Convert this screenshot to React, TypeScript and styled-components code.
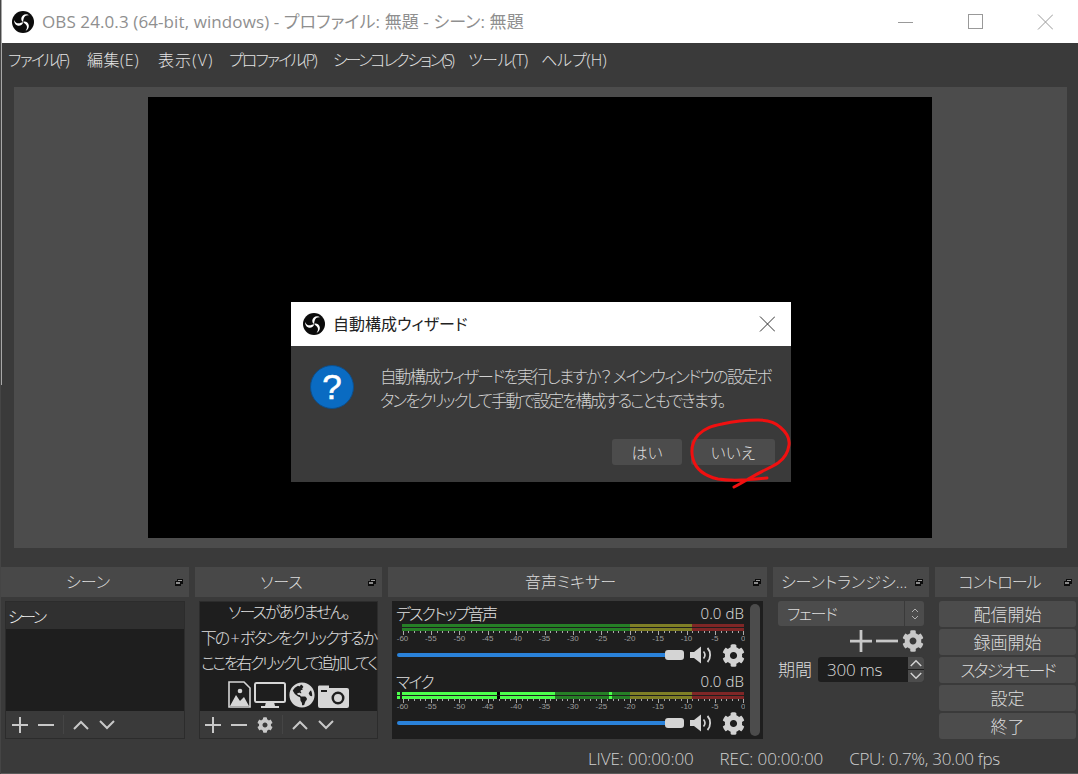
import * as React from 'react'
import styled, { createGlobalStyle } from 'styled-components'
import { FaCog, FaGlobeAmericas } from 'react-icons/fa'

const GlobalStyle = createGlobalStyle`
  html, body {
    margin: 0;
    padding: 0;
    background: #3a3a3a;
  }
  * {
    box-sizing: border-box;
  }
  body {
    font-family: "Open Sans", "Noto Sans CJK JP", sans-serif;
    font-feature-settings: "palt";
    font-weight: 300;
  }
`

const AppWindow = styled.div`
  position: relative;
  width: 1078px;
  height: 774px;
  display: flex;
  flex-direction: column;
  overflow: hidden;
  background: #3a3a3a;
  color: #dcdcdc;
  border-left: 1px solid #454545;
`
const EdgeLight = styled.div`
  position: absolute;
  left: 0;
  top: 0;
  width: 1px;
  height: 385px;
  background: #a8a8a8;
`
const TitleBar = styled.div`
  height: 43px;
  flex-shrink: 0;
  display: flex;
  align-items: center;
  padding: 0 25px 0 11px;
  background: #fff;
`
const TitleText = styled.div`
  margin-left: 8px;
  padding-bottom: 2px;
  font-size: 17px;
  font-weight: 400;
  letter-spacing: 0.1px;
  color: #8f8f8f;
  white-space: nowrap;
`
const WindowButtons = styled.div`
  margin-left: auto;
  display: flex;
  gap: 54px;
`
const MenuBar = styled.div`
  height: 44px;
  flex-shrink: 0;
  display: flex;
  padding: 4px 0 0 7px;
  font-size: 16px;
  color: #e4e4e4;
`
const MenuItem = styled.div<{ $w: number; $ls: number }>`
  width: ${p => p.$w}px;
  letter-spacing: ${p => p.$ls}px;
  white-space: nowrap;
`
const PreviewArea = styled.div`
  height: 461px;
  flex-shrink: 0;
  margin: 0 11px 0 13px;
  padding: 10px 0 0 134px;
  background: #4c4c4c;
`
const PreviewScreen = styled.div`
  width: 784px;
  height: 441px;
  background: #000;
`
const Docks = styled.div`
  height: 173px;
  flex-shrink: 0;
  margin-top: 19px;
  display: grid;
  grid-template-columns: 188px 187px 379px 156px 143px;
  gap: 6px;
`
const Dock = styled.div`
  min-width: 0;
  display: flex;
  flex-direction: column;
`
const DockHeader = styled.div`
  height: 30px;
  flex-shrink: 0;
  display: flex;
  align-items: center;
  padding-right: 6px;
  background: #484848;
  font-size: 16px;
  color: #dcdcdc;
`
const DockTitle = styled.div<{ $ls: number }>`
  flex: 1;
  min-width: 0;
  padding-bottom: 2px;
  letter-spacing: ${p => p.$ls}px;
  text-align: center;
  white-space: nowrap;
`
const FloatSvg = styled.svg`
  flex-shrink: 0;
`
const DockBody = styled.div<{ $pad: string }>`
  height: 138px;
  margin-top: 4px;
  padding: ${p => p.$pad};
  display: flex;
  flex-direction: column;
`
const ListBox = styled.div`
  flex: 1;
  display: flex;
  flex-direction: column;
  min-height: 0;
  border: 1px solid #2c2c2c;
  background: #1e1e1e;
`
const ListArea = styled.div`
  flex: 1;
  min-height: 0;
  display: flex;
  flex-direction: column;
`
const SceneRow = styled.div`
  height: 27px;
  display: flex;
  align-items: center;
  padding-left: 2px;
  background: #303030;
  font-size: 16px;
  letter-spacing: -2.4px;
  color: #f0f0f0;
`
const EmptyLine = styled.div<{ $ls: number }>`
  height: 25.5px;
  line-height: 20px;
  font-size: 16px;
  letter-spacing: ${p => p.$ls}px;
  text-align: center;
  white-space: nowrap;
  color: #e0e0e0;
`
const EmptyIcons = styled.div`
  margin-top: 2px;
  display: flex;
  justify-content: center;
  align-items: flex-end;
  gap: 3px;
  color: #d6d6d6;
`
const Toolbar = styled.div<{ $pad: number }>`
  height: 27px;
  flex-shrink: 0;
  display: flex;
  align-items: center;
  padding-left: ${p => p.$pad}px;
  background: #3a3a3a;
`
const ToolButton = styled.div`
  width: 26px;
  height: 27px;
  display: flex;
  align-items: center;
  justify-content: center;
  color: #c8c8c8;
`
const ToolSeparator = styled.div`
  width: 1px;
  height: 19px;
  margin: 0 4px;
  background: #454545;
`
const Mixer = styled.div`
  flex: 1;
  display: flex;
  padding: 3px 3px 3px 4px;
  background: #1e1e1e;
`
const MixerStrips = styled.div`
  width: 349px;
  display: flex;
  flex-direction: column;
  gap: 6px;
`
const Scrollbar = styled.div`
  width: 10px;
  margin-left: 5px;
  border-radius: 5px;
  background: #4c4c4c;
`
const Strip = styled.div`
  height: 62px;
  display: flex;
  flex-direction: column;
`
const StripTop = styled.div`
  height: 20px;
  flex-shrink: 0;
  display: flex;
  justify-content: space-between;
  align-items: center;
  padding: 0 1px 2px 0;
  font-size: 16px;
  color: #e0e0e0;
`
const StripName = styled.div`
  letter-spacing: -1.9px;
`
const StripLevel = styled.div`
  font-size: 15px;
  letter-spacing: 0.1px;
`
const Meter = styled.div`
  height: 7px;
  flex-shrink: 0;
  display: flex;
  flex-direction: column;
  gap: 1px;
`
const MeterChannel = styled.div`
  height: 3px;
  display: flex;
`
const MeterSegment = styled.div<{ $w: number; $c: string }>`
  width: ${p => p.$w}px;
  flex-shrink: 0;
  background: ${p => p.$c};
`
const Scale = styled.svg`
  display: block;
  flex-shrink: 0;
`
const SliderRow = styled.div`
  height: 22px;
  flex-shrink: 0;
  display: flex;
  align-items: center;
  padding-left: 1px;
  color: #d2d2d2;
`
const SliderTrack = styled.div`
  width: 268px;
  height: 4px;
  border-radius: 2px 0 0 2px;
  background: #2a82da;
`
const SliderHandle = styled.div`
  width: 19px;
  height: 10px;
  border-radius: 3px;
  background: #d4d4d4;
`
const SpeakerSlot = styled.div`
  margin-left: 6px;
  display: flex;
`
const GearSlot = styled.div`
  margin-left: 9px;
  display: flex;
`
const Combo = styled.div`
  height: 25px;
  flex-shrink: 0;
  display: flex;
  align-items: center;
  border-radius: 3px;
  background: #4c4c4c;
  font-size: 16px;
  letter-spacing: -1.4px;
`
const ComboText = styled.div`
  flex: 1;
  padding: 0 0 2px 9px;
`
const ComboArrows = styled.div`
  width: 20px;
  height: 25px;
  display: flex;
  align-items: center;
  justify-content: center;
  border-left: 1px solid #3a3a3a;
  color: #b0b0b0;
`
const TransitionTools = styled.div`
  height: 22px;
  flex-shrink: 0;
  margin: 4px 0;
  display: flex;
  justify-content: flex-end;
  align-items: center;
  gap: 4px;
  color: #c8c8c8;
`
const DurationRow = styled.div`
  display: flex;
  align-items: center;
  font-size: 17px;
`
const DurationLabel = styled.div`
  width: 40px;
  padding-bottom: 2px;
`
const SpinBox = styled.div`
  flex: 1;
  height: 25px;
  display: flex;
  align-items: center;
  border-radius: 3px;
  background: #1e1e1e;
  padding-left: 9px;
  overflow: hidden;
`
const SpinValue = styled.div`
  flex: 1;
  padding-bottom: 1px;
  letter-spacing: -0.2px;
`
const SpinArrows = styled.div`
  width: 16px;
  height: 25px;
  display: flex;
  flex-direction: column;
  gap: 1px;
  color: #d0d0d0;
`
const SpinArrow = styled.div`
  flex: 1;
  display: flex;
  align-items: center;
  justify-content: center;
  background: #4c4c4c;
`
const ControlList = styled.div`
  display: flex;
  flex-direction: column;
  gap: 2px;
`
const ControlButton = styled.div<{ $ls?: number }>`
  height: 26px;
  display: flex;
  align-items: center;
  justify-content: center;
  padding-bottom: 2px;
  border-radius: 3px;
  background: #4c4c4c;
  font-size: 17px;
  letter-spacing: ${p => p.$ls ?? 0}px;
  color: #dcdcdc;
`
const StatusBar = styled.div`
  height: 33px;
  flex-shrink: 0;
  display: flex;
  justify-content: flex-end;
  align-items: center;
  padding: 3px 78px 0 0;
  gap: 26px;
  font-size: 17px;
  color: #d0d0d0;
`
const StatusItem = styled.div<{ $ls: number }>`
  letter-spacing: ${p => p.$ls}px;
`
const BottomEdge = styled.div`
  height: 1px;
  flex-shrink: 0;
  background: #5a5a5a;
`
const Dialog = styled.div`
  position: absolute;
  left: 290px;
  top: 302px;
  width: 500px;
  height: 180px;
  display: flex;
  flex-direction: column;
  background: #3a3a3a;
`
const DialogTitle = styled.div`
  height: 44px;
  flex-shrink: 0;
  display: flex;
  align-items: center;
  padding: 0 16px 0 12px;
  background: #fff;
  color: #222;
  font-size: 16px;
  font-weight: 400;
`
const DialogTitleText = styled.div`
  flex: 1;
  margin-left: 8px;
  padding-bottom: 2px;
`
const DialogBody = styled.div`
  display: flex;
  padding: 19px 0 0 19px;
`
const QuestionSvg = styled.svg`
  flex-shrink: 0;
`
const DialogMessage = styled.div`
  margin-left: 26px;
  font-size: 16.5px;
  line-height: 24px;
  color: #d2d2d2;
`
const MessageLine = styled.div<{ $ls: number }>`
  letter-spacing: ${p => p.$ls}px;
  white-space: nowrap;
`
const DialogButtons = styled.div`
  margin-top: auto;
  margin-bottom: 17px;
  display: flex;
  justify-content: flex-end;
  padding-right: 16px;
  gap: 9px;
`
const DialogButton = styled.div<{ $w: number }>`
  width: ${p => p.$w}px;
  height: 26px;
  display: flex;
  align-items: center;
  justify-content: center;
  border-radius: 3px;
  background: #4c4c4c;
  font-size: 16px;
  color: #dcdcdc;
`
const Scribble = styled.svg`
  position: absolute;
  left: 395px;
  top: 110px;
  overflow: visible;
`

const ObsLogo = () => (
  <svg width='22' height='22' viewBox='0 0 24 24'>
    <circle cx='12' cy='12' r='12' fill='#0b0b0b' />
    {[0, 120, 240].map(a => (
      <path
        key={a}
        transform={`rotate(${a} 12 12)`}
        d='M11.7 12C9.5 10.2 9.6 6.6 11.8 4.8 13.8 3.2 16.8 3.2 18.8 4.8 16.3 4.3 14.2 5.2 13.2 7 12.3 8.6 12.6 10.6 11.7 12Z'
        fill='#fff'
      />
    ))}
  </svg>
)

const WindowIcon = ({ kind, color = '#999' }: { kind: string; color?: string }) => (
  <svg width='16' height='16' viewBox='0 0 16 16' fill='none' stroke={color} strokeWidth='1'>
    {kind === 'min' && <path d='M1 8.5H16' />}
    {kind === 'max' && <rect x='1.5' y='0.5' width='14' height='14' />}
    {kind === 'close' && <path d='M1 0.5L16 15.5M16 0.5L1 15.5' />}
  </svg>
)

const PlusIcon = ({ size = 16 }: { size?: number }) => (
  <svg width={size} height={size} viewBox='0 0 16 16' fill='none' stroke='currentColor' strokeWidth='2'>
    <path d='M0 8H16M8 0V16' />
  </svg>
)

const MinusIcon = ({ size = 16 }: { size?: number }) => (
  <svg width={size} height={size} viewBox='0 0 16 16' fill='none' stroke='currentColor' strokeWidth='2'>
    <path d='M0 8H16' />
  </svg>
)

const Chevron = ({ up, width = 16, height = 10 }: { up?: boolean; width?: number; height?: number }) => (
  <svg width={width} height={height} viewBox='0 0 16 10' fill='none' stroke='currentColor' strokeWidth='2'>
    <path d={up ? 'M1 9L8 2L15 9' : 'M1 1L8 8L15 1'} />
  </svg>
)

const FloatIcon = () => (
  <FloatSvg width='8' height='7' viewBox='0 0 8 7'>
    <rect x='2' y='0' width='6' height='5' fill='#0c0c0c' />
    <rect x='3' y='1' width='4' height='1' fill='#9a9a9a' />
    <rect x='0' y='2' width='6' height='5' fill='#0c0c0c' />
    <rect x='1' y='3' width='4' height='2' fill='#8a8a8a' />
  </FloatSvg>
)

const SpeakerIcon = () => (
  <svg width='23' height='18' viewBox='0 0 23 18' fill='none'>
    <path d='M0 6H4L11 0.5V17.5L4 12H0Z' fill='#d4d4d4' />
    <path d='M13.5 5.5C15.2 7.5 15.2 10.5 13.5 12.5' stroke='#d4d4d4' strokeWidth='1.6' />
    <path d='M17.5 2C21 5.6 21 12.4 17.5 16' stroke='#d4d4d4' strokeWidth='1.8' />
  </svg>
)

const ImageFileIcon = () => (
  <svg width='23' height='27' viewBox='0 0 23 27'>
    <path d='M1 1H16L22 7V26H1Z' fill='none' stroke='currentColor' strokeWidth='1.6' />
    <circle cx='12' cy='10' r='2.3' fill='currentColor' />
    <path d='M2 25L8 14L12 20L16 16L21 25Z' fill='currentColor' />
  </svg>
)

const MonitorIcon = () => (
  <svg width='32' height='26' viewBox='0 0 32 26'>
    <rect x='1' y='1' width='30' height='19' rx='1.5' fill='none' stroke='currentColor' strokeWidth='2' />
    <path d='M12 20H20L21 24H25V26H7V24H11Z' fill='currentColor' />
  </svg>
)

const CameraIcon = () => (
  <svg width='31' height='24' viewBox='0 0 31 24'>
    <path
      fillRule='evenodd'
      d='M1 1.5H11V4H29Q31 4 31 6V22Q31 24 29 24H2Q0 24 0 22V3Q0 1.5 1 1.5ZM20 7.5A6.5 6.5 0 1 0 20 20.5A6.5 6.5 0 1 0 20 7.5ZM20 10A4 4 0 1 1 20 18A4 4 0 1 1 20 10ZM3 6V8H9V6Z'
      fill='currentColor'
    />
  </svg>
)

const QuestionIcon = () => (
  <QuestionSvg width='44' height='44' viewBox='0 0 44 44'>
    <circle cx='22' cy='22' r='21.5' fill='#0a6bc2' stroke='#0d4f8c' />
    <text x='22' y='34' textAnchor='middle' fontFamily='"Liberation Sans", sans-serif' fontWeight='400' fontSize='35' stroke='#fff' strokeWidth='0.6' fill='#fff'>?</text>
  </QuestionSvg>
)

const menuItems = [
  { label: 'ファイル(F)', w: 79, ls: -1.75 },
  { label: '編集(E)', w: 71, ls: 0.5 },
  { label: '表示(V)', w: 71, ls: 1.1 },
  { label: 'プロファイル(P)', w: 104, ls: -1.9 },
  { label: 'シーンコレクション(S)', w: 135, ls: -2.2 },
  { label: 'ツール(T)', w: 73, ls: -0.5 },
  { label: 'ヘルプ(H)', w: 66, ls: -0.1 },
]

const DIM_GREEN = '#267f26'
const BRIGHT_GREEN = '#4cff4c'
const YELLOW = '#7f7f26'
const RED = '#7f2626'

const desktopMeter = [
  { w: 6, c: 'transparent' },
  { w: 228, c: DIM_GREEN },
  { w: 62, c: YELLOW },
  { w: 52, c: RED },
]

const micMeter = [
  { w: 1, c: 'transparent' },
  { w: 3, c: BRIGHT_GREEN },
  { w: 2, c: 'transparent' },
  { w: 95, c: BRIGHT_GREEN },
  { w: 3, c: '#000' },
  { w: 55, c: BRIGHT_GREEN },
  { w: 54, c: DIM_GREEN },
  { w: 3, c: BRIGHT_GREEN },
  { w: 18, c: DIM_GREEN },
  { w: 62, c: YELLOW },
  { w: 52, c: RED },
]

const MeterScale = () => {
  const ticks = Array.from({ length: 61 }, (_, i) => i)
  return (
    <Scale width='349' height='13'>
      {ticks.map(i => {
        const x = Math.round(6.5 + i * 5.68) + 0.5
        return <line key={i} x1={x} x2={x} y1='0' y2={i % 5 === 0 ? 4 : 2} stroke='#aaa' strokeWidth='1' />
      })}
      {ticks.filter(i => i % 5 === 0).map(i => (
        <text
          key={i}
          x={6.5 + i * 5.68}
          y='10'
          textAnchor='middle'
          fontFamily='"Liberation Sans", sans-serif'
          fontSize='8'
          fill='#9c9c9c'
        >
          {i === 60 ? '0' : `-${60 - i}`}
        </text>
      ))}
    </Scale>
  )
}

const MixerStrip = ({ name, segments }: { name: string; segments: { w: number; c: string }[] }) => (
  <Strip>
    <StripTop>
      <StripName>{name}</StripName>
      <StripLevel>0.0 dB</StripLevel>
    </StripTop>
    <Meter>
      {[0, 1].map(ch => (
        <MeterChannel key={ch}>
          {segments.map((s, i) => <MeterSegment key={i} $w={s.w} $c={s.c} />)}
        </MeterChannel>
      ))}
    </Meter>
    <MeterScale />
    <SliderRow>
      <SliderTrack />
      <SliderHandle />
      <SpeakerSlot><SpeakerIcon /></SpeakerSlot>
      <GearSlot><FaCog size={23} /></GearSlot>
    </SliderRow>
  </Strip>
)

const DockFrame = ({ title, pad, ls = 0, children }: { title: string; pad: string; ls?: number; children: React.ReactNode }) => (
  <Dock>
    <DockHeader>
      <DockTitle $ls={ls}>{title}</DockTitle>
      <FloatIcon />
    </DockHeader>
    <DockBody $pad={pad}>{children}</DockBody>
  </Dock>
)

const ListToolbar = ({ pad, gear }: { pad: number; gear?: boolean }) => (
  <Toolbar $pad={pad}>
    <ToolButton><PlusIcon /></ToolButton>
    <ToolButton><MinusIcon /></ToolButton>
    {gear && <ToolButton><FaCog size={16} /></ToolButton>}
    <ToolSeparator />
    <ToolButton><Chevron up /></ToolButton>
    <ToolButton><Chevron /></ToolButton>
  </Toolbar>
)

export default class App extends React.Component {
  render(): JSX.Element {
    return (
      <AppWindow>
        <GlobalStyle />
        <EdgeLight />

        <TitleBar>
          <ObsLogo />
          <TitleText>OBS 24.0.3 (64-bit, windows) - プロファイル: 無題 - シーン: 無題</TitleText>
          <WindowButtons>
            <WindowIcon kind='min' />
            <WindowIcon kind='max' />
            <WindowIcon kind='close' />
          </WindowButtons>
        </TitleBar>

        <MenuBar>
          {menuItems.map(m => <MenuItem key={m.label} $w={m.w} $ls={m.ls}>{m.label}</MenuItem>)}
        </MenuBar>

        <PreviewArea>
          <PreviewScreen />
        </PreviewArea>

        <Docks>
          <DockFrame title='シーン' pad='0 4px'>
            <ListBox>
              <ListArea>
                <SceneRow>シーン</SceneRow>
              </ListArea>
              <ListToolbar pad={1} />
            </ListBox>
          </DockFrame>

          <DockFrame title='ソース' pad='0 4px'>
            <ListBox>
              <ListArea>
                <EmptyLine $ls={-1.95}>ソースがありません。</EmptyLine>
                <EmptyLine $ls={-1.9}>下の + ボタンをクリックするか</EmptyLine>
                <EmptyLine $ls={-2.4}>ここを右クリックして追加してく</EmptyLine>
                <EmptyIcons>
                  <ImageFileIcon />
                  <MonitorIcon />
                  <FaGlobeAmericas size={26} />
                  <CameraIcon />
                </EmptyIcons>
              </ListArea>
              <ListToolbar pad={0} gear />
            </ListBox>
          </DockFrame>

          <DockFrame title='音声ミキサー' pad='0 4px'>
            <Mixer>
              <MixerStrips>
                <MixerStrip name='デスクトップ音声' segments={desktopMeter} />
                <MixerStrip name='マイク' segments={micMeter} />
              </MixerStrips>
              <Scrollbar />
            </Mixer>
          </DockFrame>

          <DockFrame title='シーントランジシ…' pad='0 5px'>
            <Combo>
              <ComboText>フェード</ComboText>
              <ComboArrows>
                <svg width='8' height='14' viewBox='0 0 8 14' fill='none' stroke='currentColor'>
                  <path d='M1 5L4 2L7 5M1 9L4 12L7 9' />
                </svg>
              </ComboArrows>
            </Combo>
            <TransitionTools>
              <PlusIcon size={22} />
              <MinusIcon size={22} />
              <FaCog size={22} />
            </TransitionTools>
            <DurationRow>
              <DurationLabel>期間</DurationLabel>
              <SpinBox>
                <SpinValue>300 ms</SpinValue>
                <SpinArrows>
                  <SpinArrow><Chevron up width={12} height={8} /></SpinArrow>
                  <SpinArrow><Chevron width={12} height={8} /></SpinArrow>
                </SpinArrows>
              </SpinBox>
            </DurationRow>
          </DockFrame>

          <DockFrame title='コントロール' pad='0 2px 0 4px' ls={-1}>
            <ControlList>
              <ControlButton>配信開始</ControlButton>
              <ControlButton>録画開始</ControlButton>
              <ControlButton $ls={-2.1}>スタジオモード</ControlButton>
              <ControlButton>設定</ControlButton>
              <ControlButton>終了</ControlButton>
            </ControlList>
          </DockFrame>
        </Docks>

        <StatusBar>
          <StatusItem $ls={-0.1}>LIVE: 00:00:00</StatusItem>
          <StatusItem $ls={-0.1}>REC: 00:00:00</StatusItem>
          <StatusItem $ls={-0.3}>CPU: 0.7%, 30.00 fps</StatusItem>
        </StatusBar>
        <BottomEdge />

        <Dialog>
          <DialogTitle>
            <ObsLogo />
            <DialogTitleText>自動構成ウィザード</DialogTitleText>
            <WindowIcon kind='close' color='#333' />
          </DialogTitle>
          <DialogBody>
            <QuestionIcon />
            <DialogMessage>
              <MessageLine $ls={-1.7}>自動構成ウィザードを実行しますか？ メインウィンドウの設定ボ</MessageLine>
              <MessageLine $ls={-2}>タンをクリックして手動で設定を構成することもできます。</MessageLine>
            </DialogMessage>
          </DialogBody>
          <DialogButtons>
            <DialogButton $w={70}>はい</DialogButton>
            <DialogButton $w={84}>いいえ</DialogButton>
          </DialogButtons>
          <Scribble width='110' height='80' viewBox='686 412 110 80'>
            <path
              d='M767 478C750 480 730 481 718 479C705 476 696 470 693 459C690 448 693 441 698 435C705 428 712 426 722 424C735 421 748 420 758 420C768 420 775 422 780 427C786 432 790 438 789 445C788 453 785 458 778 463C770 468 762 471 750 478C745 481 740 484 734 487'
              fill='none'
              stroke='#f01010'
              strokeWidth='3'
              strokeLinecap='round'
            />
          </Scribble>
        </Dialog>
      </AppWindow>
    )
  }
}
